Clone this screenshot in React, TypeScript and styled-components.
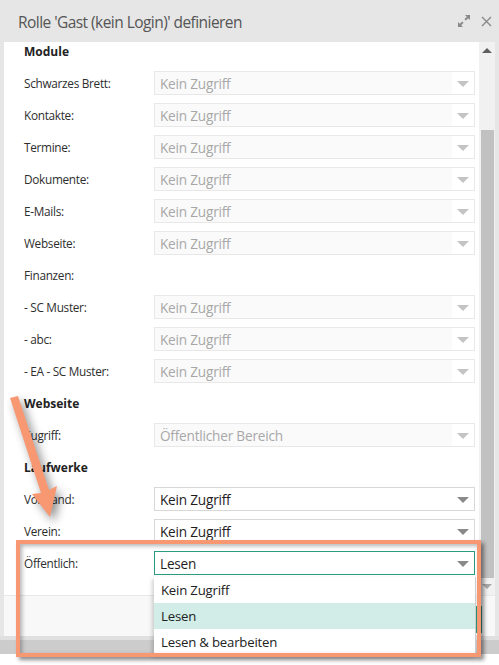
import React, { FC } from 'react'
import styled, { createGlobalStyle } from 'styled-components'

const GlobalStyle = createGlobalStyle`
  html, body {
    margin: 0;
    padding: 0;
    background: #ffffff;
  }
  body {
    font-family: 'Open Sans', 'Noto Sans', sans-serif;
    width: 499px;
    height: 665px;
    overflow: hidden;
  }
`

const Page = styled.div`
  position: relative;
  width: 499px;
  height: 665px;
  background: #ffffff;
`

const Window = styled.div`
  display: flex;
  flex-direction: column;
  background: #e6e6e6;
  padding: 0 4px;
`

const Header = styled.div`
  height: 42px;
  display: flex;
  align-items: center;
  padding-left: 14px;
  padding-right: 3px;
`

const Title = styled.div`
  flex: 1;
  font-size: 15.5px;
  color: #555;
  letter-spacing: -0.55px;
  padding-top: 1px;
`

const HeaderIcons = styled.div`
  display: flex;
  align-items: center;
  gap: 10px;
  color: #888;
`

const Body = styled.div`
  height: 553px;
  display: flex;
  background: #ffffff;
`

const Content = styled.div`
  flex: 1;
  overflow: hidden;
  padding: 0 4px 0 20px;
`

const Rows = styled.div`
  margin-top: -7px;
`

const Row = styled.div`
  height: 32px;
  display: flex;
  align-items: center;
`

const Section = styled(Row)`
  font-weight: 700;
  font-size: 12px;
  color: #222;
`

const Label = styled.div`
  width: 130px;
  font-size: 11.8px;
  color: #2e2e2e;
  letter-spacing: -0.3px;
`

const Select = styled.div<{ $state: 'disabled' | 'enabled' | 'focus' }>`
  width: 321px;
  height: 24px;
  box-sizing: border-box;
  display: flex;
  align-items: center;
  border: 1px solid
    ${(p) => (p.$state === 'focus' ? '#2a9a80' : p.$state === 'enabled' ? '#d8d8d8' : '#e8e8e8')};
  background: ${(p) => (p.$state === 'disabled' ? '#fafafa' : '#ffffff')};
  color: ${(p) => (p.$state === 'disabled' ? '#a8a8a8' : '#1e1e1e')};
  font-size: 13.6px;
`

const SelectText = styled.div`
  flex: 1;
  padding-left: 5px;
  letter-spacing: -0.2px;
`

const Caret = styled.div<{ $dim: boolean }>`
  width: 22px;
  height: 100%;
  display: flex;
  align-items: center;
  justify-content: center;
  background: #ffffff;
  &::after {
    content: '';
    border-left: 6px solid transparent;
    border-right: 6px solid transparent;
    border-top: 6px solid ${(p) => (p.$dim ? '#c4c4c4' : '#8a8a8a')};
    margin-top: 2px;
  }
`

const Scrollbar = styled.div`
  width: 16px;
  background: #f1f1f1;
  display: flex;
  flex-direction: column;
  align-items: center;
`

const ScrollArrow = styled.div<{ $up: boolean; $color: string }>`
  height: 16px;
  width: 16px;
  display: flex;
  align-items: center;
  justify-content: center;
  &::after {
    content: '';
    border-left: 5px solid transparent;
    border-right: 5px solid transparent;
    ${(p) =>
      p.$up ? `border-bottom: 5px solid ${p.$color};` : `border-top: 5px solid ${p.$color};`}
  }
`

const ScrollGap = styled.div<{ $h: number }>`
  height: ${(p) => p.$h}px;
`

const Thumb = styled.div`
  width: 13px;
  height: 448px;
  background: #c1c1c1;
`

const Footer = styled.div`
  height: 40px;
  border-top: 1px solid #e8e8e8;
  background: #f8f8f8;
  display: flex;
  align-items: center;
  justify-content: flex-end;
  padding-right: 13px;
`

const FooterButton = styled.div`
  width: 90px;
  height: 27px;
  margin-top: 6px;
  background: #2a9a80;
`

const BottomLine = styled.div`
  height: 4px;
  background: #e0e0e0;
`

const BottomBar = styled.div`
  height: 14px;
  background: #cccccc;
`

const Dropdown = styled.div`
  position: absolute;
  left: 154px;
  top: 577px;
  width: 321px;
  background: #ffffff;
  border-right: 1px solid #d0d0d0;
  box-shadow: -2px 2px 4px rgba(0, 0, 0, 0.18);
`

const Option = styled.div<{ $active?: boolean }>`
  height: 26px;
  display: flex;
  align-items: center;
  padding-left: 7px;
  font-size: 13.2px;
  color: #222;
  letter-spacing: -0.2px;
  background: ${(p) => (p.$active ? '#d2ede8' : '#ffffff')};
`

const Highlight = styled.div`
  position: absolute;
  left: 16px;
  top: 540px;
  width: 465px;
  height: 117px;
  box-sizing: border-box;
  border: 4px solid #f79873;
  box-shadow: 3px 3px 4px rgba(0, 0, 0, 0.45), inset 2px 2px 4px rgba(0, 0, 0, 0.3);
`

const ArrowSvg = styled.svg`
  position: absolute;
  left: 0;
  top: 390px;
  filter: drop-shadow(4px 5px 5px rgba(0, 0, 0, 0.45));
`

type Item =
  | { kind: 'section'; text: string }
  | { kind: 'label'; text: string }
  | { kind: 'select'; text: string; value: string; state: 'disabled' | 'enabled' | 'focus' }

const items: Item[] = [
  { kind: 'section', text: 'Module' },
  { kind: 'select', text: 'Schwarzes Brett:', value: 'Kein Zugriff', state: 'disabled' },
  { kind: 'select', text: 'Kontakte:', value: 'Kein Zugriff', state: 'disabled' },
  { kind: 'select', text: 'Termine:', value: 'Kein Zugriff', state: 'disabled' },
  { kind: 'select', text: 'Dokumente:', value: 'Kein Zugriff', state: 'disabled' },
  { kind: 'select', text: 'E-Mails:', value: 'Kein Zugriff', state: 'disabled' },
  { kind: 'select', text: 'Webseite:', value: 'Kein Zugriff', state: 'disabled' },
  { kind: 'label', text: 'Finanzen:' },
  { kind: 'select', text: '- SC Muster:', value: 'Kein Zugriff', state: 'disabled' },
  { kind: 'select', text: '- abc:', value: 'Kein Zugriff', state: 'disabled' },
  { kind: 'select', text: '- EA - SC Muster:', value: 'Kein Zugriff', state: 'disabled' },
  { kind: 'section', text: 'Webseite' },
  { kind: 'select', text: 'Zugriff:', value: 'Öffentlicher Bereich', state: 'disabled' },
  { kind: 'section', text: 'Laufwerke' },
  { kind: 'select', text: 'Vorstand:', value: 'Kein Zugriff', state: 'enabled' },
  { kind: 'select', text: 'Verein:', value: 'Kein Zugriff', state: 'enabled' },
  { kind: 'select', text: 'Öffentlich:', value: 'Lesen', state: 'focus' },
]

const options = ['Kein Zugriff', 'Lesen', 'Lesen & bearbeiten']

const ExpandIcon: FC = () => (
  <svg width="14" height="14" viewBox="0 0 14 14" fill="#8a8a8a">
    <path d="M8 1h5v5l-1.8-1.8-2.4 2.4-1.4-1.4 2.4-2.4z" />
    <path d="M6 13H1V8l1.8 1.8 2.4-2.4 1.4 1.4-2.4 2.4z" />
  </svg>
)

const CloseIcon: FC = () => (
  <svg width="11" height="11" viewBox="0 0 11 11" stroke="#8a8a8a" strokeWidth="1.4">
    <path d="M1 1l9 9M10 1l-9 9" />
  </svg>
)

const App: FC = () => {
  return (
    <Page>
      <GlobalStyle />
      <Window>
        <Header>
          <Title>Rolle 'Gast (kein Login)' definieren</Title>
          <HeaderIcons>
            <ExpandIcon />
            <CloseIcon />
          </HeaderIcons>
        </Header>
        <Body>
          <Content>
            <Rows>
              {items.map((item, i) =>
                item.kind === 'section' ? (
                  <Section key={i}>{item.text}</Section>
                ) : item.kind === 'label' ? (
                  <Row key={i}>
                    <Label>{item.text}</Label>
                  </Row>
                ) : (
                  <Row key={i}>
                    <Label>{item.text}</Label>
                    <Select $state={item.state}>
                      <SelectText>{item.value}</SelectText>
                      <Caret $dim={item.state === 'disabled'} />
                    </Select>
                  </Row>
                ),
              )}
            </Rows>
          </Content>
          <Scrollbar>
            <ScrollArrow $up $color="#606060" />
            <ScrollGap $h={72} />
            <Thumb />
            <ScrollArrow $up={false} $color="#a8a8a8" />
          </Scrollbar>
        </Body>
        <Footer>
          <FooterButton />
        </Footer>
      </Window>
      <BottomLine />
      <BottomBar />

      <Dropdown>
        {options.map((o) => (
          <Option key={o} $active={o === 'Lesen'}>
            {o}
          </Option>
        ))}
      </Dropdown>

      <Highlight />
      <ArrowSvg width="70" height="140" viewBox="0 0 70 140">
        <polygon points="10,8 18,6 49,100 57,96 50,127 32,104 41,103" fill="#f79873" />
      </ArrowSvg>
    </Page>
  )
}

export default App
